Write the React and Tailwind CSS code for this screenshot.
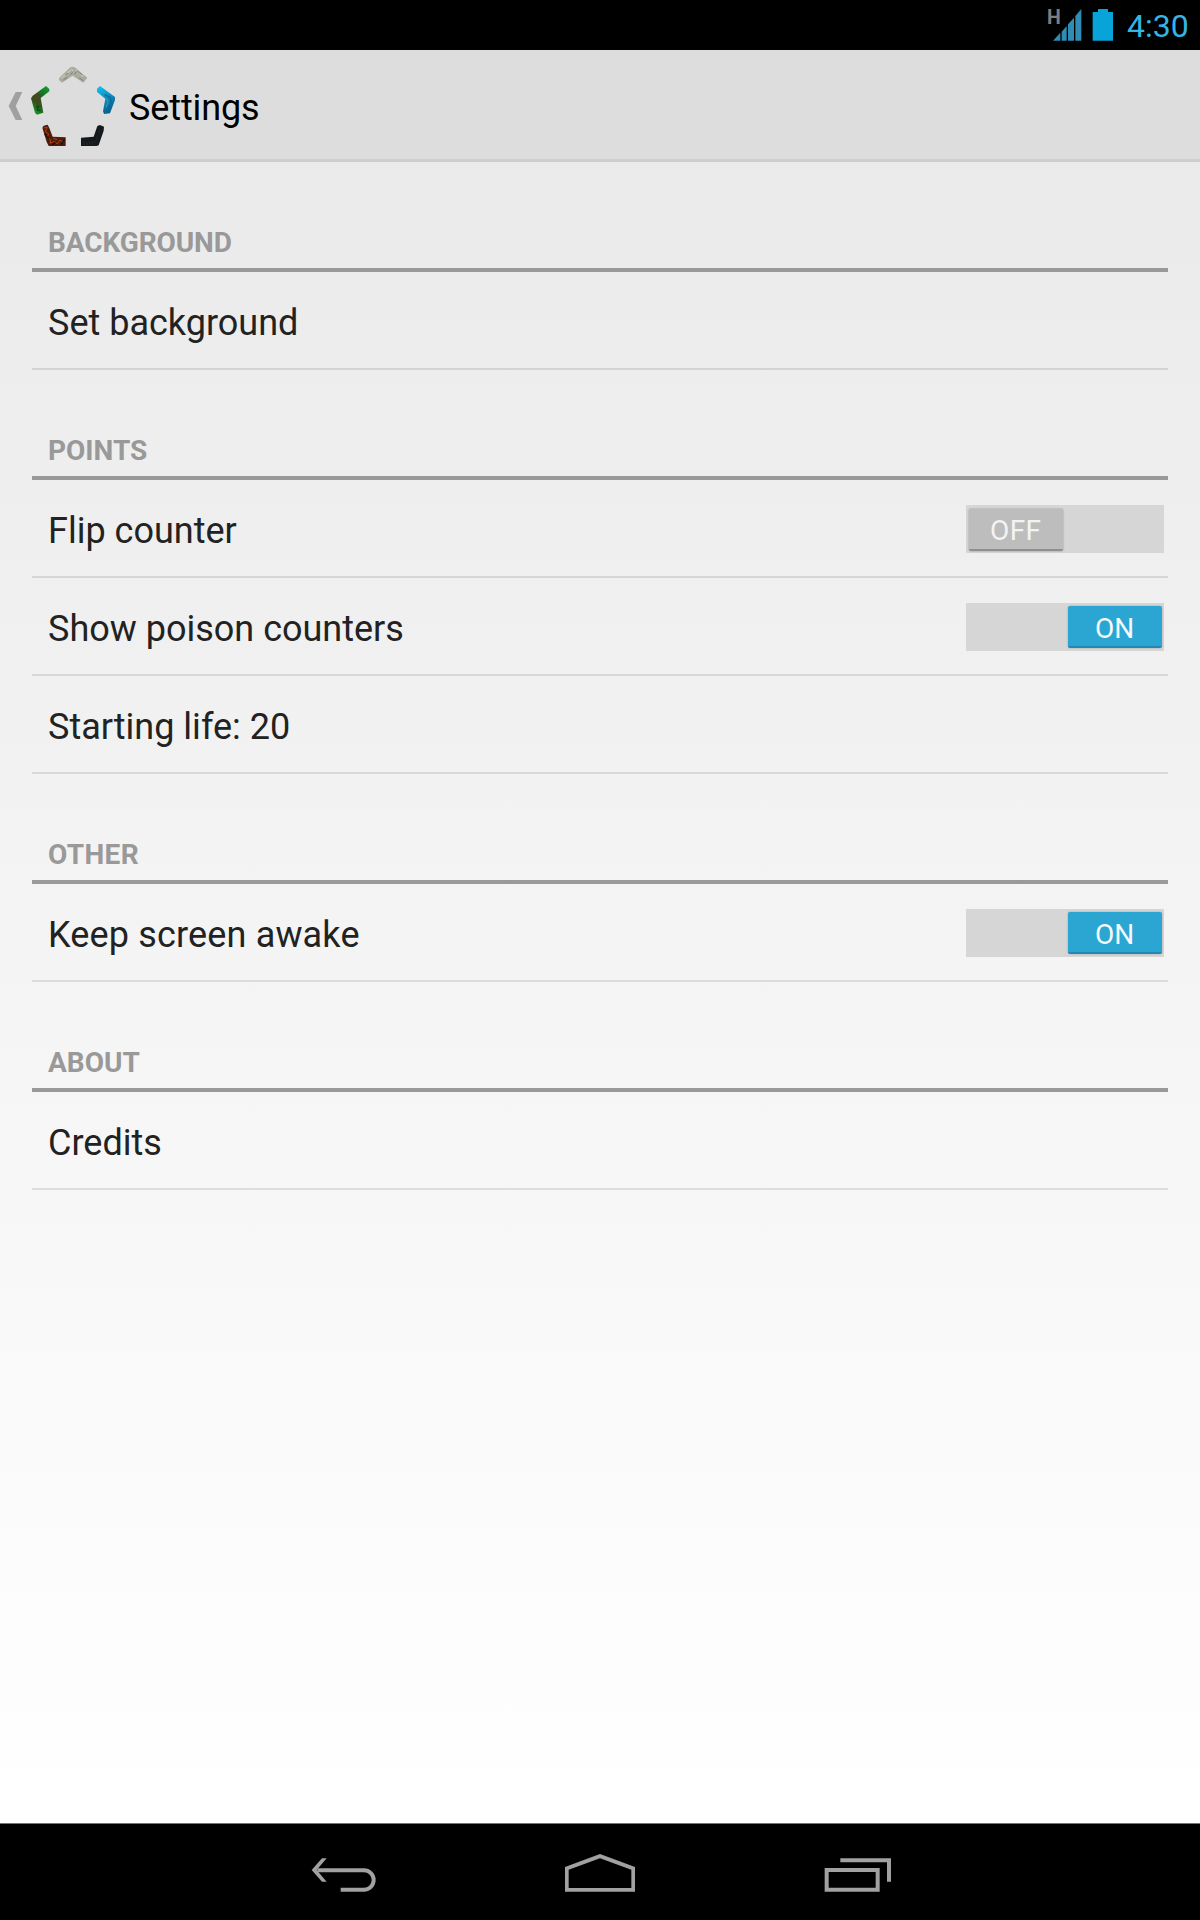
import React from "react";

function StatusBar() {
  return (
    <div className="flex h-[50px] items-start justify-end bg-black pr-[12px]">
      <span className="mt-[6px] -mr-[8px] w-[14px] text-[19.5px] leading-[23px] font-bold text-[#7d7d7d]">H</span>
      <svg className="mt-[9px] h-8 w-[29px]" viewBox="38 27 87 96" fill="#2f8cb5">
        <path d="M38 122L60 98V122ZM64 95L79 78V122H64ZM83 73L101 53V122H83ZM105 48L123 27V122H105Z" />
      </svg>
      <svg className="mt-[9px] ml-[10px] h-8 w-[22px]" viewBox="157 27 66 96" fill="#08a3d8">
        <path d="M175 27H205V36H220V122H159V36H175Z" />
      </svg>
      <span className="mt-[6px] ml-[13px] w-[61px] text-[32px] leading-[40px] whitespace-nowrap text-[#33b5e5]">
        4:30
      </span>
    </div>
  );
}

function Logo() {
  return (
    <svg className="ml-[8px] h-20 w-[85px]" viewBox="93 18 255 240">
      <defs>
        <linearGradient id="green" x1="0.8" y1="0" x2="0.3" y2="1">
          <stop offset="0" stopColor="#109a30" />
          <stop offset="0.25" stopColor="#127a22" />
          <stop offset="0.5" stopColor="#3f4a1e" />
          <stop offset="0.7" stopColor="#2f5a1c" />
          <stop offset="1" stopColor="#0f9a26" />
        </linearGradient>
        <linearGradient id="blue" x1="0.1" y1="0" x2="0.5" y2="1">
          <stop offset="0" stopColor="#17c0ee" />
          <stop offset="0.4" stopColor="#1097c8" />
          <stop offset="1" stopColor="#0c5f8c" />
        </linearGradient>
      </defs>
      <path d="M178 53L211 22Q217 18 224 22L262 53L250 68L218 47L186 68L177 60Z" fill="#a9ab9f" />
      <path d="M184 55L212 30M226 30L250 50M214 26L222 38" stroke="#c3c5ba" strokeWidth="4" fill="none" />
      <path d="M190 60L202 52M222 42L232 34L246 44M212 44L220 34M238 54L250 62M196 44L204 40" stroke="#7f8276" strokeWidth="3" fill="none" />
      <path d="M93 115L98 107L138 78L148 87V94L122 114L130 158L111 164L105 158Z" fill="url(#green)" />
      <path d="M98 116L112 106L120 104M104 124L114 120L112 136" stroke="#4c4222" strokeWidth="5" fill="none" />
      <path d="M108 142L116 138L112 150L122 152" stroke="#0a4f14" strokeWidth="4" fill="none" />
      <path d="M291 86L300 78L345 111V120L330 160L312 162L309 154L316 116L291 96Z" fill="url(#blue)" />
      <path d="M314 104L330 112L334 124L322 150" stroke="#0b6d97" strokeWidth="4" fill="none" />
      <path d="M320 116L324 128L318 142" stroke="#27a5d0" strokeWidth="3" fill="none" />
      <path d="M127 203L131 197L143 194L148 204L158 230L197 232V258H146L140 246Z" fill="#4d1c0c" />
      <path d="M131 204L142 202L136 214L146 222L141 232L152 240L150 250L164 244L172 252L180 240L192 248M160 236L172 238" stroke="#b8400f" strokeWidth="3" fill="none" />
      <path d="M134 222L146 236M156 254L166 248M184 254L194 238" stroke="#1d0c08" strokeWidth="4" fill="none" />
      <path d="M243 233L281 230L292 198L300 195L312 200L311 212L296 256L290 258H243Z" fill="#14191b" />
      <path d="M248 246H286L302 206M250 252H280" stroke="#252d30" strokeWidth="3" strokeDasharray="5 4" fill="none" />
    </svg>
  );
}

function ActionBar() {
  return (
    <header className="flex h-[112px] items-start border-b-[3px] border-[#cecece] bg-[#dddddd] pl-[8px]">
      <svg className="mt-[42px] h-[28px] w-[15px]" viewBox="24 96 45 84" fill="#a0a0a0">
        <path d="M47 96H67L47 138L67 180H47L26 138Z" />
      </svg>
      <div className="mt-4">
        <Logo />
      </div>
      <h1 className="mt-[36px] ml-[13px] text-[36px] leading-[44px] tracking-[-0.12px] text-black">Settings</h1>
    </header>
  );
}

function Switch({ on }) {
  return (
    <div className={"flex h-12 w-[198px] bg-[#d6d6d6] pt-[4px] pr-[2px] pl-[3px] " + (on ? "justify-end" : "justify-start")}>
      {on ? (
        <div className="-mt-px h-[42px] w-[94px] rounded-[2px] border-b-2 border-[#2389b0] bg-[#2ba6d2] pl-[27px] text-[28px] leading-[46px] text-[#f4f9fb] shadow-[0_0_2px_rgba(0,0,0,0.25)]">
          ON
        </div>
      ) : (
        <div className="h-[42px] w-[94px] rounded-[2px] border-b-2 border-[#8f8f8f] bg-[#bdbdbd] pl-[21px] text-[28px] leading-[44px] tracking-[0.4px] text-[#f3f3f3] shadow-[0_0_2px_rgba(0,0,0,0.35)]">
          OFF
        </div>
      )}
    </div>
  );
}

function Row({ label, toggle, className = "" }) {
  return (
    <div className="flex h-[98px] items-center justify-between border-b-2 border-black/10 pr-1 pl-4">
      <span className={"pt-[5px] text-[36px] leading-[44px] text-[#222222] " + className}>{label}</span>
      {toggle && (
        <div className="pt-[2px]">
          <Switch on={toggle === "on"} />
        </div>
      )}
    </div>
  );
}

function Section({ title, children, className = "" }) {
  return (
    <section>
      <div className="flex h-[110px] items-end border-b-4 border-[#999999] pb-[9px] pl-4">
        <h2 className={"text-[28px] leading-8 font-bold text-[#999999] " + className}>{title}</h2>
      </div>
      {children}
    </section>
  );
}

function NavBar() {
  return (
    <nav className="flex h-[97px] border-t border-[#3c86a3] bg-black pl-[290px]">
      <svg className="h-24 w-[120px]" viewBox="0 42 360 288">
        <path d="M82 181H222A29 29 0 0 1 222 239H152" stroke="#a1a1a1" strokeWidth="12" fill="none" />
        <path d="M65 180L96 145H110L80 180L110 215H96Z" fill="#a1a1a1" />
      </svg>
      <svg className="ml-[140px] h-24 w-[100px]" viewBox="0 42 300 288" fill="#a1a1a1">
        <path fillRule="evenodd" d="M45 171L150 132L255 171V245H45ZM56 179V234H244V179L150 145Z" />
      </svg>
      <svg className="ml-[160px] h-24 w-[100px]" viewBox="0 42 300 288" fill="none" stroke="#a1a1a1">
        <path d="M50 180H203V239H50Z" strokeWidth="12" />
        <path d="M91 151H237V215" strokeWidth="12" />
      </svg>
    </nav>
  );
}

export default function App() {
  return (
    <div className="flex h-[1920px] w-[1200px] flex-col overflow-hidden font-[Roboto,sans-serif]">
      <StatusBar />
      <div className="flex flex-1 flex-col bg-linear-to-b from-[#e9e9e9] to-white">
        <ActionBar />
        <main className="px-8">
          <Section title="BACKGROUND" className="tracking-[-0.1px]">
            <Row label="Set background" />
          </Section>
          <Section title="POINTS">
            <Row label="Flip counter" toggle="off" />
            <Row label="Show poison counters" toggle="on" />
            <Row label="Starting life: 20" />
          </Section>
          <Section title="OTHER" className="tracking-[0.35px]">
            <Row label="Keep screen awake" toggle="on" className="tracking-[0.16px]" />
          </Section>
          <Section title="ABOUT">
            <Row label="Credits" />
          </Section>
        </main>
      </div>
      <NavBar />
    </div>
  );
}
